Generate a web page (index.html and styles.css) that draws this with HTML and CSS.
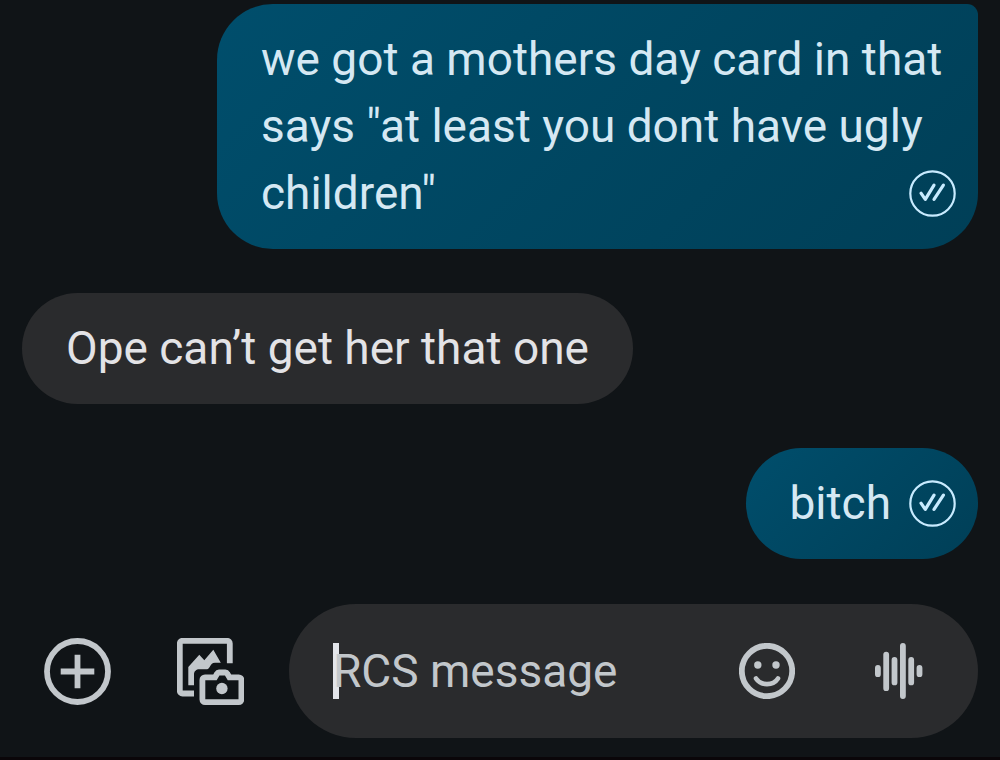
FILE: index.html
```
<!DOCTYPE html>
<html lang="en">
<head>
	<meta charset="UTF-8">
	<meta name="viewport" content="width=device-width, initial-scale=1">
	<title>Messages</title>
	<link rel="stylesheet" href="styles.css">
</head>
<body>
	<!-- shared read receipt icon -->
	<svg class="defs" width="0" height="0" aria-hidden="true">
		<symbol id="read" viewBox="0 0 47 47">
			<circle cx="23.5" cy="23.5" r="22.2" stroke-width="2.2"/>
			<path d="M12 23.2l4.3 6.2L25 15.2M25 29.4l9.4-14.2" stroke-width="3.2" stroke-linecap="round" stroke-linejoin="round"/>
		</symbol>
	</svg>

	<!-- messages -->
	<main class="thread">
		<div class="bubble sent first">we got a mothers day card in that says "at least you dont have ugly children"<svg class="status" role="img" aria-label="Read"><use href="#read"/></svg></div>
		<div class="bubble received">Ope can’t get her that one</div>
		<div class="bubble sent">bitch<svg class="status" role="img" aria-label="Read"><use href="#read"/></svg></div>
	</main>

	<!-- composer -->
	<form class="composer">
		<button class="icon-btn" type="button" aria-label="Add">
			<svg width="67" height="67" viewBox="0 0 67 67">
				<circle class="line" cx="33.5" cy="33.5" r="30.5"/>
				<path class="line" d="M33.5 16.7v33.6M16.7 33.5h33.6"/>
			</svg>
		</button>
		<button class="icon-btn" type="button" aria-label="Gallery">
			<svg width="67" height="67" viewBox="0 0 67 67">
				<path class="line" d="M52.8 25.3V5.5a2.7 2.7 0 0 0-2.7-2.7H5.5a2.7 2.7 0 0 0-2.7 2.7v47.3a2.7 2.7 0 0 0 2.7 2.7H17"/>
				<path class="fill" d="M11.3 47.3V29l11-12.3 5 5.5 9-10.5 7.5 13H38c-3 0-4 2-5.5 4.5-1 1.7-2 2.1-3.5 2.1h-6.7c-3 0-5.3 2-5.3 5v11z"/>
				<path class="line" d="M28 39.3h10l2.2-3.7a2 2 0 0 1 1.8-1.1h6.4a2 2 0 0 1 1.8 1.1l2.2 3.7h9.4a2.6 2.6 0 0 1 2.6 2.6v19.6a2.6 2.6 0 0 1-2.6 2.6H28a2.6 2.6 0 0 1-2.6-2.6V41.9a2.6 2.6 0 0 1 2.6-2.6z"/>
				<circle class="fill" cx="44.9" cy="50.5" r="5.7"/>
			</svg>
		</button>
		<div class="field">
			<input class="input" type="text" placeholder="RCS message" aria-label="RCS message">
			<button class="icon-btn" type="button" aria-label="Emoji">
				<svg width="56" height="56" viewBox="0 0 56 56">
					<circle class="line" cx="28" cy="28" r="25.2"/>
					<circle class="fill" cx="18.8" cy="22" r="3.7"/>
					<circle class="fill" cx="37" cy="22" r="3.7"/>
					<path class="line thin" d="M17 35.4c5 7.6 17 7.6 22 0"/>
				</svg>
			</button>
			<button class="icon-btn" type="button" aria-label="Voice message">
				<svg width="48" height="56" viewBox="0 0 48 56">
					<path class="line round" d="M2.9 25v6.2M11.2 11.6v33.6M19.5 17v22.4M27.9 2.9v50.2M36.2 17v22.4M44.5 25v6.2"/>
				</svg>
			</button>
		</div>
	</form>
</body>
</html>
```
FILE: styles.css
```
* {
	box-sizing: border-box;
}

html,
body {
	margin: 0;
	padding: 0;
}

body {
	display: flex;
	flex-direction: column;
	min-height: 100vh;
	background: #101417;
	border-bottom: 3px solid #0a0609;
	font-family: Roboto, "Liberation Sans", sans-serif;
	font-size: 46px;
	line-height: 67px;
}

.defs {
	position: absolute;
}

/* messages */
.thread {
	display: flex;
	flex-direction: column;
	align-items: flex-start;
	gap: 44px;
	padding: 4px 22px 45px;
}

.bubble {
	max-width: 761px;
	padding: 22px 44px;
	border-radius: 56px;
}

.received {
	background: #2a2b2d;
	color: #e3e3e6;
}

.sent {
	align-self: flex-end;
	padding-right: 22px;
	background: linear-gradient(135deg, #004e6c, #003f57);
	color: #d5e8f3;
}

.first {
	border-top-right-radius: 11px;
}

.status {
	float: right;
	width: 47px;
	height: 47px;
	margin: 10px 0 0 18px;
	fill: none;
	stroke: #c8ebff;
}

/* composer */
.composer {
	display: flex;
	align-items: center;
	gap: 66px;
	padding: 0 22px 0 44px;
}

.icon-btn {
	flex: none;
	padding: 0;
	border: none;
	background: none;
	cursor: pointer;
}

.icon-btn svg {
	display: block;
}

.line {
	fill: none;
	stroke: #c2c7cb;
	stroke-width: 5.8;
}

.thin {
	stroke-width: 4.6;
	stroke-linecap: round;
}

.round {
	stroke-linecap: round;
}

.fill {
	fill: #c2c7cb;
}

.field {
	display: flex;
	flex: 1;
	align-items: center;
	gap: 80px;
	min-width: 0;
	margin-left: -21px;
	padding: 39px 55px 39px 44px;
	border-radius: 67px;
	background: #2a2b2d;
}

/* the caret is a bar behind the placeholder */
.input {
	flex: 1;
	min-width: 0;
	height: 56px;
	padding: 0;
	border: none;
	outline: none;
	background: linear-gradient(#e3e5ea, #e3e5ea) no-repeat 0 0 / 6px 56px;
	color: #e3e3e6;
	font: inherit;
	line-height: 56px;
}

.input::placeholder {
	color: #c2c7cb;
	opacity: 1;
}
```
